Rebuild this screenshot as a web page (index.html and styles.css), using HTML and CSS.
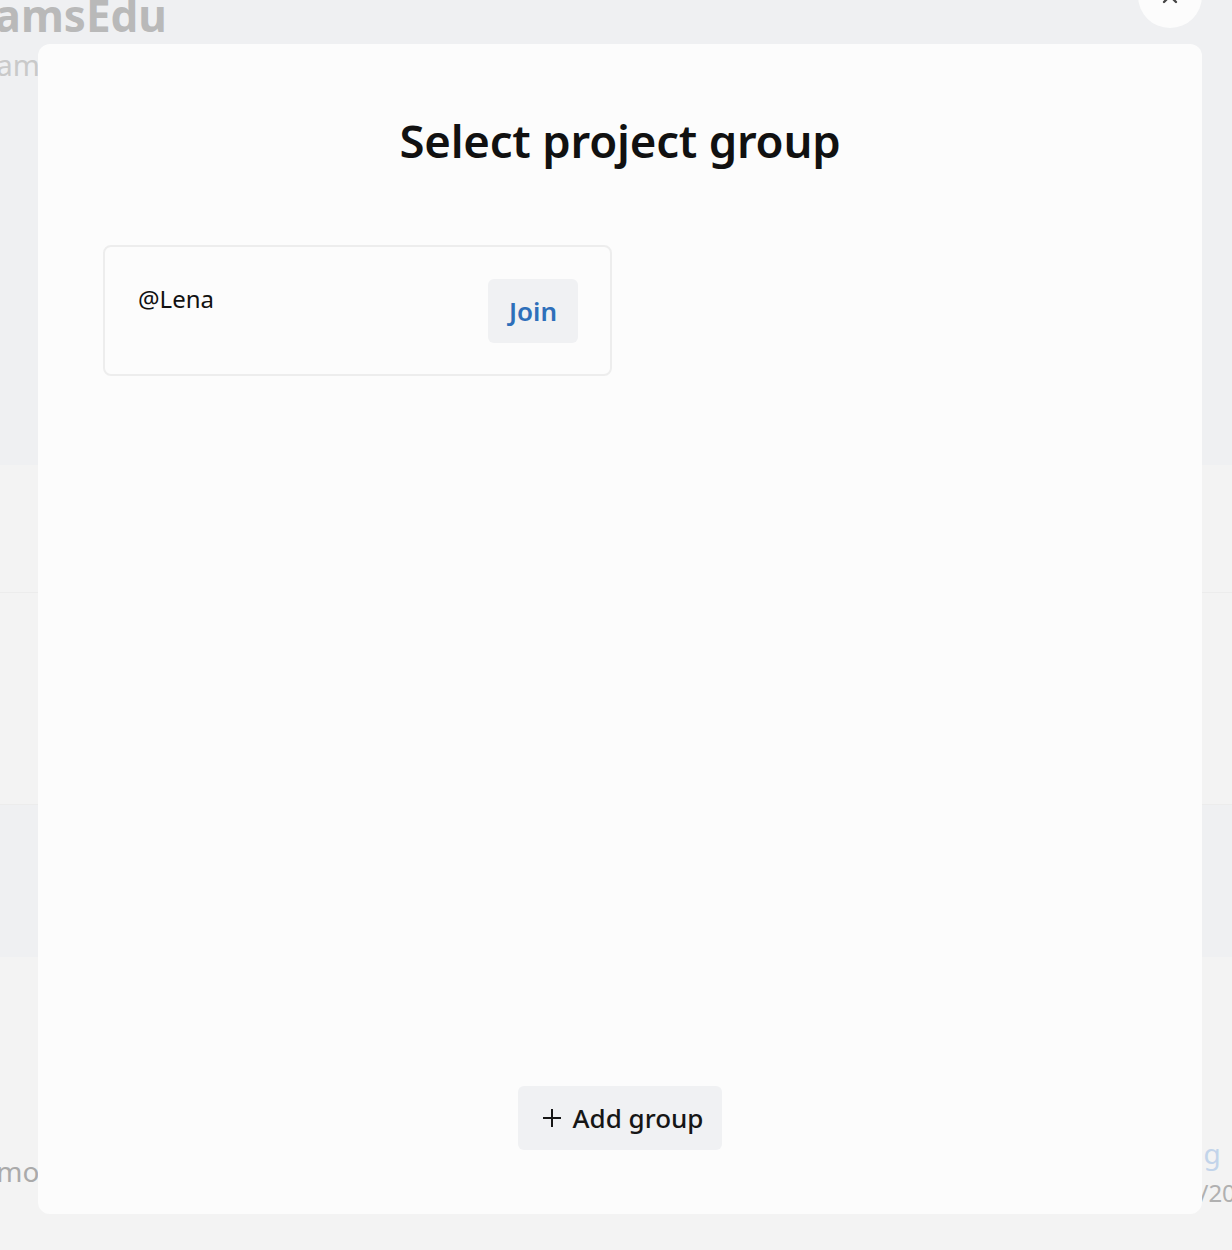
FILE: index.html
```html
<!DOCTYPE html>
<html lang="en">
<head>
<meta charset="utf-8">
<title>Select project group</title>
<link rel="stylesheet" href="styles.css">
</head>
<body>
<div class="page">
  <header class="page-header">
    <div class="brand">TeamsEdu</div>
    <div class="brand-sub">Teams</div>
  </header>
  <div class="row row-a"></div>
  <div class="row row-b"></div>
  <div class="row row-c"></div>
  <div class="row row-d">
    <span class="row-left">Demo</span>
    <span class="row-right"><span class="link">Meeting</span><span class="date">12/2024</span></span>
  </div>
</div>

<div class="overlay">
  <div class="modal">
    <button class="close" aria-label="Close">
      <svg width="18" height="18" viewBox="0 0 18 18"><path d="M3 3 L15 15 M15 3 L3 15" stroke="#444" stroke-width="2.4" stroke-linecap="round"/></svg>
    </button>
    <h1 class="title">Select project group</h1>
    <div class="groups">
      <div class="group-card">
        <span class="group-name">@Lena</span>
        <button class="join">Join</button>
      </div>
    </div>
    <div class="footer">
      <button class="add">
        <svg width="22" height="22" viewBox="0 0 22 22"><path d="M11 2 V20 M2 11 H20" stroke="#161616" stroke-width="2"/></svg>
        <span>Add group</span>
      </button>
    </div>
  </div>
</div>
</body>
</html>
```

FILE: styles.css
```css
* { box-sizing: border-box; }
html, body { margin: 0; padding: 0; }
body {
  font-family: "Noto Sans", "Open Sans", sans-serif;
  background: #f3f3f3;
  width: 1232px;
  height: 1250px;
  overflow: hidden;
}
.page { display: flex; flex-direction: column; }
.page-header {
  height: 465px;
  background: #eff0f2;
  margin-left: -54px;
}
.brand {
  font-size: 44px;
  font-weight: 700;
  color: #b9b9b9;
  line-height: 40px;
  margin-top: -5px;
  white-space: nowrap;
}
.brand-sub {
  font-size: 29px;
  color: #c9c9c9;
  line-height: 34px;
  margin-top: 13px;
  margin-left: 20px;
  white-space: nowrap;
}
.row { border-bottom: 1px solid #ececec; }
.row-a { height: 128px; background: #f3f3f3; }
.row-b { height: 212px; background: #f3f3f3; }
.row-c { height: 152px; background: #eff0f2; border-bottom: none; }
.row-d {
  height: 300px;
  background: #f3f3f3;
  display: flex;
  justify-content: space-between;
  padding-top: 195px;
  margin-left: -40px;
  margin-right: -120px;
  white-space: nowrap;
}
.row-left { font-size: 28px; color: #aaaaaa; }
.row-right {
  display: flex;
  flex-direction: column;
  align-items: flex-start;
  width: 232px;
}
.link { font-size: 28px; color: #c2d4ea; line-height: 28px; margin-top: -13px; margin-left: -8px; }
.date { font-size: 24px; color: #b0b0b0; margin-top: 9px; margin-left: 52px; }

.overlay {
  position: fixed;
  inset: 0;
  display: flex;
  padding: 44px 30px 36px 38px;
}
.modal {
  position: relative;
  flex: 1;
  background: #fcfcfc;
  border-radius: 12px;
  display: flex;
  flex-direction: column;
  padding: 0 65px 64px;
}
.close {
  position: absolute;
  top: -80px;
  right: 0;
  width: 64px;
  height: 64px;
  border-radius: 50%;
  border: none;
  background: #fcfcfc;
  display: flex;
  align-items: center;
  justify-content: center;
  padding: 0;
}
.title {
  margin: 66px 0 0;
  text-align: center;
  font-size: 45.5px;
  font-weight: 600;
  line-height: 60px;
  color: #111;
  letter-spacing: -0.2px;
}
.groups {
  margin-top: 75px;
  display: flex;
  flex-wrap: wrap;
  gap: 24px;
}
.group-card {
  width: 509px;
  height: 131px;
  border: 2px solid #ededed;
  border-radius: 8px;
  display: flex;
  justify-content: space-between;
  align-items: flex-start;
  padding: 32px 32px 0 33px;
}
.group-name {
  font-size: 24px;
  color: #111;
  line-height: 40px;
}
.join {
  width: 90px;
  height: 64px;
  border: none;
  border-radius: 6px;
  background: #f0f1f3;
  color: #2e6fba;
  font-family: inherit;
  font-size: 26px;
  font-weight: 600;
}
.footer {
  margin-top: auto;
  display: flex;
  justify-content: center;
}
.add {
  height: 64px;
  width: 204px;
  border: none;
  border-radius: 6px;
  background: #f0f1f3;
  color: #161616;
  font-family: inherit;
  font-size: 26px;
  font-weight: 500;
  display: flex;
  align-items: center;
  justify-content: center;
  gap: 10px;
  padding: 0 14px 0 18px;
}
```
